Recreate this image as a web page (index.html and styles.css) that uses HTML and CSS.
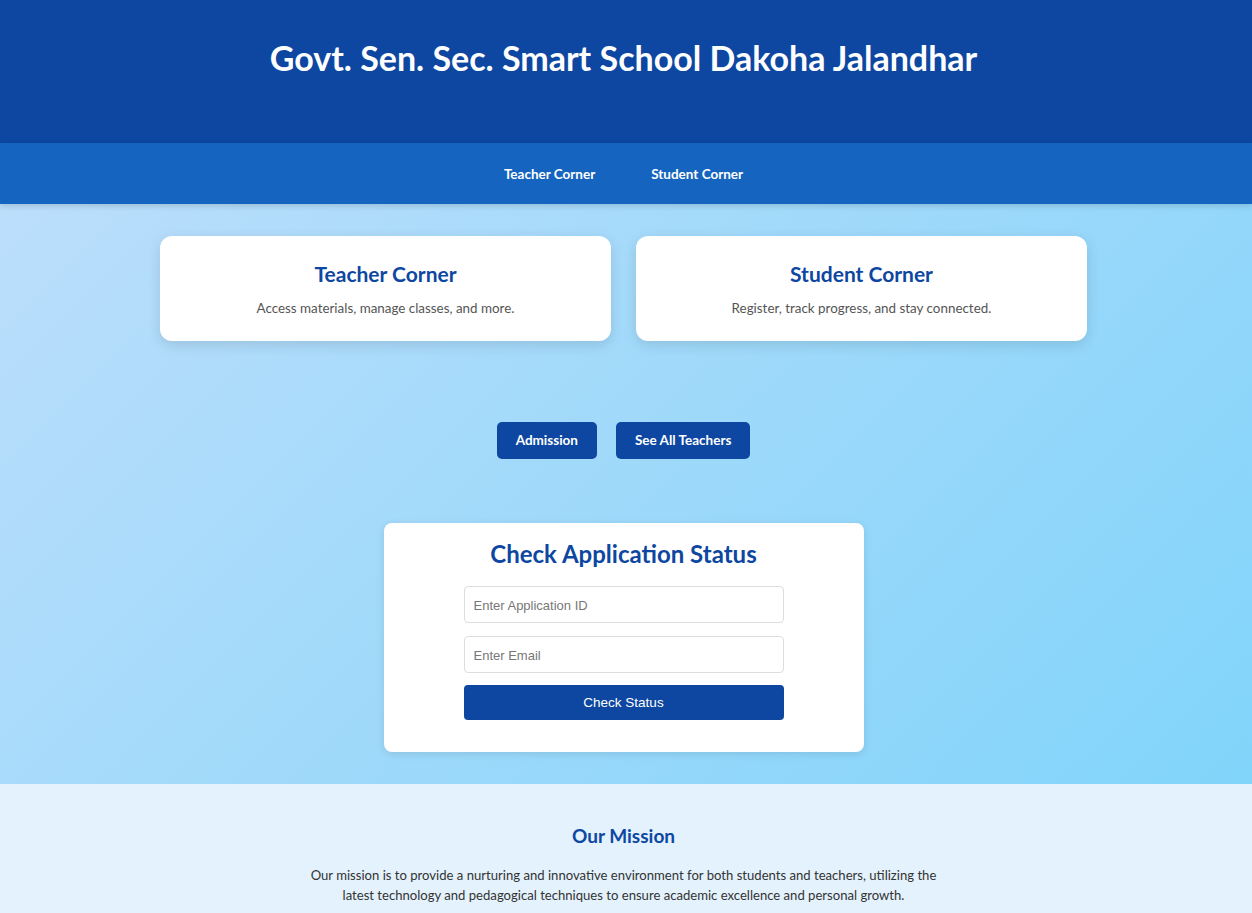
FILE: index.html
```html
<!DOCTYPE html>
<html lang="en">
<head>
<meta charset="utf-8">
<title>Govt. Sen. Sec. Smart School Dakoha Jalandhar</title>
<link rel="stylesheet" href="styles.css">
</head>
<body>
<header class="site-header">
  <h1 class="site-title">Govt. Sen. Sec. Smart School Dakoha Jalandhar</h1>
</header>
<nav class="site-nav">
  <a class="nav-link" href="#">Teacher Corner</a>
  <a class="nav-link" href="#">Student Corner</a>
</nav>
<main class="main">
  <div class="corners">
    <div class="corner-card">
      <h2 class="corner-title">Teacher Corner</h2>
      <p class="corner-text">Access materials, manage classes, and more.</p>
    </div>
    <div class="corner-card">
      <h2 class="corner-title">Student Corner</h2>
      <p class="corner-text">Register, track progress, and stay connected.</p>
    </div>
  </div>
  <div class="actions">
    <a class="action-btn" href="#">Admission</a>
    <a class="action-btn" href="#">See All Teachers</a>
  </div>
  <div class="status-card">
    <h2 class="status-title">Check Application Status</h2>
    <form class="status-form">
      <input class="status-input" type="text" placeholder="Enter Application ID">
      <input class="status-input" type="email" placeholder="Enter Email">
      <button class="status-btn" type="button">Check Status</button>
    </form>
  </div>
</main>
<section class="mission">
  <h2 class="mission-title">Our Mission</h2>
  <p class="mission-text">Our mission is to provide a nurturing and innovative environment for both students and teachers, utilizing the latest technology and pedagogical techniques to ensure academic excellence and personal growth.</p>
</section>
</body>
</html>
```
FILE: styles.css
```css
* { box-sizing: border-box; }
html, body { margin: 0; padding: 0; }
body {
  font-family: "Lato", "Noto Sans", sans-serif;
  color: #333;
  background: #e3f2fd;
}
.site-header {
  background: #0d47a1;
  height: 143px;
  padding: 35px 5px 0 0;
  text-align: center;
}
.site-title {
  margin: 0;
  color: #fff;
  font-size: 34px;
  font-weight: 700;
  line-height: 46px;
}
.site-nav {
  background: #1565c0;
  height: 61px;
  display: flex;
  justify-content: center;
  align-items: center;
  gap: 56px;
  padding-right: 5px;
  box-shadow: 0 2px 6px rgba(0,0,0,0.15);
  position: relative;
}
.nav-link {
  color: #fff;
  text-decoration: none;
  font-size: 13.5px;
  font-weight: 700;
}
.main {
  background: linear-gradient(135deg, #bbdefb 0%, #81d4fa 100%);
  padding: 32px 5px 32px 0;
  display: flex;
  flex-direction: column;
  align-items: center;
}
.corners {
  display: flex;
  gap: 25px;
}
.corner-card {
  width: 451px;
  height: 105px;
  background: #fff;
  border-radius: 12px;
  box-shadow: 0 4px 14px rgba(0,0,0,0.12);
  text-align: center;
  padding-top: 25px;
}
.corner-title {
  margin: 0;
  color: #0d47a1;
  font-size: 21px;
  font-weight: 700;
  line-height: 26px;
}
.corner-text {
  margin: 13px 0 0;
  color: #555;
  font-size: 13.4px;
  line-height: 16px;
}
.actions {
  margin-top: 81px;
  display: flex;
  gap: 19px;
}
.action-btn {
  display: block;
  background: #0d47a1;
  color: #fff;
  text-decoration: none;
  font-size: 13.5px;
  font-weight: 700;
  height: 37px;
  line-height: 37px;
  padding: 0 19px;
  border-radius: 5px;
}
.status-card {
  margin-top: 64px;
  width: 480px;
  background: #fff;
  border-radius: 8px;
  box-shadow: 0 2px 8px rgba(0,0,0,0.1);
  padding: 17px 80px 32px;
  text-align: center;
}
.status-title {
  margin: 0 0 18px;
  color: #0d47a1;
  font-size: 24px;
  font-weight: 700;
  line-height: 28px;
}
.status-form {
  display: flex;
  flex-direction: column;
  gap: 13px;
}
.status-input {
  width: 320px;
  height: 37px;
  border: 1px solid #ddd;
  border-radius: 4px;
  padding: 2px 9px 0;
  font-family: "Liberation Sans", Arial, sans-serif;
  font-size: 13px;
  color: #333;
}
.status-input::placeholder { color: #777; }
.status-btn {
  width: 320px;
  height: 35px;
  margin-top: -1px;
  border: none;
  border-radius: 4px;
  background: #0d47a1;
  color: #fff;
  font-family: "Liberation Sans", Arial, sans-serif;
  font-size: 13.5px;
}
.mission {
  background: #e3f2fd;
  padding: 40px 5px 20px 0;
  text-align: center;
}
.mission-title {
  margin: 0;
  color: #0d47a1;
  font-size: 19px;
  font-weight: 700;
  line-height: 24px;
}
.mission-text {
  margin: 17px auto 0;
  max-width: 640px;
  color: #333;
  font-size: 13.1px;
  line-height: 20px;
}
```
